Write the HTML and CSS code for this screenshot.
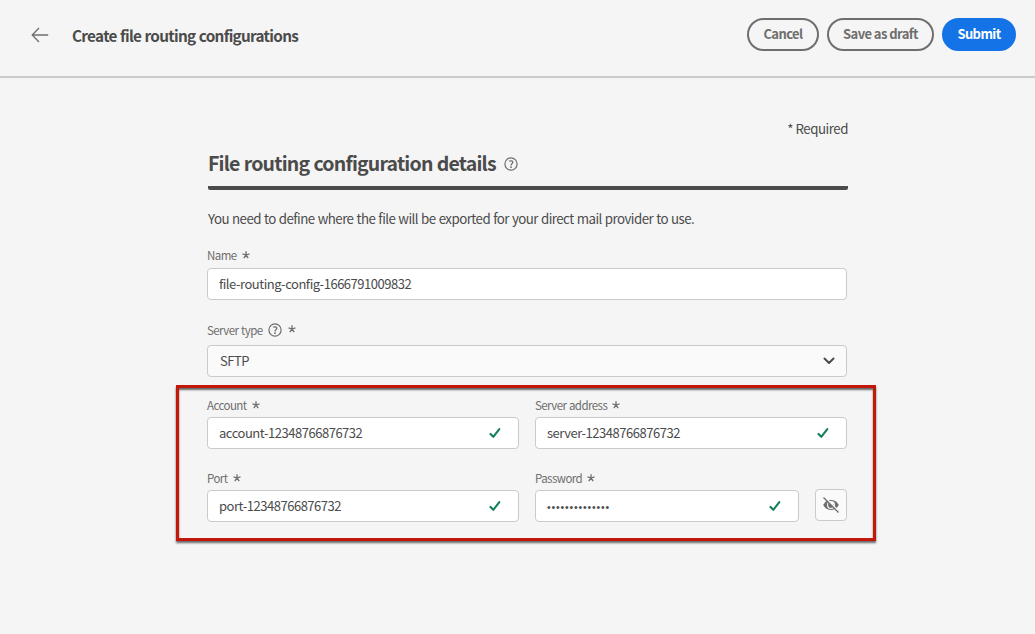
FILE: index.html
```html
<!DOCTYPE html>
<html lang="en">
<head>
<meta charset="utf-8">
<title>Create file routing configurations</title>
<link rel="stylesheet" href="styles.css">
</head>
<body>
<svg width="0" height="0" class="defs">
  <symbol id="check" viewBox="0 0 12 12"><path d="M1.5 6.900l2.800 2.900L10.300 2.100" fill="none" stroke="#12805c" stroke-width="2.100" stroke-linecap="round" stroke-linejoin="round"/></symbol>
  <symbol id="help" viewBox="0 0 14 14"><circle cx="7" cy="7" r="6.1" fill="none" stroke="currentColor" stroke-width="1.2"/><path d="M5.1 4.3c1-.7 3.7-.9 3.7.9 0 1.4-1.8 1.5-1.8 3.2" fill="none" stroke="currentColor" stroke-width="1.3"/><circle cx="7" cy="10.2" r=".9" fill="currentColor"/></symbol>
  <symbol id="star" viewBox="0 0 8 8"><path d="M4 4V.3M4 4L.5 2.9M4 4l3.5-1.1M4 4L1.8 7.1M4 4l2.2 3.1" stroke="currentColor" stroke-width="1.3" fill="none"/></symbol>
</svg>
<header class="topbar">
  <svg class="back" viewBox="0 0 18 16"><path d="M8 1L1.2 8 8 15M1.2 8H17.2" fill="none" stroke="#6e6e6e" stroke-width="1.3"/></svg>
  <h1 class="title">Create file routing configurations</h1>
  <div class="actions">
    <button class="btn cancel">Cancel</button>
    <button class="btn draft">Save as draft</button>
    <button class="btn submit">Submit</button>
  </div>
</header>
<main class="content">
  <div class="required">* Required</div>
  <div class="heading"><h2 class="heading-text">File routing configuration details</h2><svg class="help-small"><use href="#help"/></svg></div>
  <p class="intro">You need to define where the file will be exported for your direct mail provider to use.</p>
  <div class="label">Name<svg class="star"><use href="#star"/></svg></div>
  <div class="field name-field"><span>file-routing-config-1666791009832</span></div>
  <div class="label server-label">Server type<svg class="help"><use href="#help"/></svg><svg class="star raised"><use href="#star"/></svg></div>
  <div class="field select"><span>SFTP</span><svg class="chevron" viewBox="0 0 12 8"><path d="M1.5 1.5L6 6l4.5-4.5" fill="none" stroke="#4b4b4b" stroke-width="2" stroke-linecap="round" stroke-linejoin="round"/></svg></div>
  <section class="grid">
    <div>
      <div class="label">Account<svg class="star"><use href="#star"/></svg></div>
      <div class="field"><span>account-12348766876732</span><svg class="check"><use href="#check"/></svg></div>
    </div>
    <div>
      <div class="label">Server address<svg class="star"><use href="#star"/></svg></div>
      <div class="field"><span>server-12348766876732</span><svg class="check"><use href="#check"/></svg></div>
    </div>
    <div>
      <div class="label">Port<svg class="star"><use href="#star"/></svg></div>
      <div class="field"><span>port-12348766876732</span><svg class="check"><use href="#check"/></svg></div>
    </div>
    <div>
      <div class="label">Password<svg class="star"><use href="#star"/></svg></div>
      <div class="password-row">
        <div class="field"><span class="dots">••••••••••••••</span><svg class="check"><use href="#check"/></svg></div>
        <button class="eye" aria-label="Show password"><svg viewBox="0 0 18 18"><path d="M1.2 9C3 5.800 5.700 4 9 4s6 1.800 7.800 5c-1.800 3.200-4.500 5-7.800 5S3 12.200 1.200 9z" fill="#6e6e6e"/><circle cx="9" cy="9" r="4" fill="#fafafa"/><path d="M9 6.300a1.500 1.500 0 0 0 2.500 1.800A2.800 2.800 0 1 1 9 6.300z" fill="#6e6e6e"/><path d="M2.600 1L17 15.400" stroke="#fafafa" stroke-width="1.500"/><path d="M1.500 1.500L16.500 16.500" stroke="#6e6e6e" stroke-width="1.300"/></svg></button>
      </div>
    </div>
  </section>
</main>
</body>
</html>
```
FILE: styles.css
```css
*, *::after { box-sizing: border-box; }
body { margin: 0; min-height: 634px; background: #f5f5f5; color: #4b4b4b; font: 13.3px/20px "Noto Sans CJK SC", sans-serif; }
h1, h2, p { margin: 0; }
button { font: inherit; padding: 0; }
svg { flex: none; }
.defs { display: block; height: 0; }
.topbar { height: 78px; border-bottom: 2px solid #cacaca; padding: 18px 19px 0 31px; display: flex; align-items: flex-start; }
.back { width: 18px; height: 16px; margin-top: 9px; }
.title { margin: 6px 0 0 23px; font-size: 15.3px; font-weight: 700; line-height: 22px; letter-spacing: -.7px; word-spacing: .5px; white-space: nowrap; }
.actions { margin-left: auto; display: flex; gap: 8px; }
.btn { height: 33px; border: 2px solid #6e6e6e; border-radius: 17px; background: transparent; color: #6e6e6e; font-size: 13px; font-weight: 700; letter-spacing: -.58px; line-height: 26px; padding-bottom: 2px; white-space: nowrap; }
.cancel { width: 72px; }
.draft { width: 107px; }
.submit { width: 74px; background: #1473e6; border-color: #1473e6; color: #fff; }
.content { width: 640px; margin-left: 207px; }
.required { height: 20px; margin: 41px -1px 0 0; text-align: right; letter-spacing: -.46px; }
.heading { height: 51px; margin: 0 -1px 0 1px; padding-top: 10px; border-bottom: 4px solid #4b4b4b; border-radius: 2px; display: flex; align-items: flex-start; gap: 8px; }
.heading-text { font-size: 19.5px; line-height: 28px; font-weight: 700; letter-spacing: -.8px; word-spacing: .5px; white-space: nowrap; }
.help-small { width: 14px; height: 14px; margin-top: 8px; color: #6e6e6e; }
.intro { margin: 19px 0 0 1px; letter-spacing: -.54px; word-spacing: .6px; white-space: nowrap; }
.label { height: 20px; margin-bottom: 3px; display: flex; align-items: center; gap: 5px; font-size: 11.5px; letter-spacing: -.55px; word-spacing: .4px; color: #6e6e6e; white-space: nowrap; }
.intro + .label { margin-top: 16px; }
.star { width: 8px; height: 8px; }
.raised { margin: -3px 0 0 1px; }
.help { width: 14px; height: 14px; }
.server-label { margin: 20px 0 5px; }
.field { height: 32px; padding: 0 17px 0 11px; border: 1px solid #cacaca; border-radius: 4px; background: #fff; display: flex; align-items: center; justify-content: space-between; font-size: 13px; letter-spacing: -.47px; white-space: nowrap; }
.field span { margin-top: -1px; }
.select { background: #fafafa; padding: 0 12px; }
.select .chevron { margin-right: -1px; }
.chevron { width: 12px; height: 8px; }
.check { width: 12px; height: 12px; }
.grid { position: relative; margin-top: 18px; display: grid; grid-template-columns: 312px 312px; gap: 18px 16px; }
.grid .label { margin-bottom: 2px; }
.grid .label + * { margin-bottom: 1px; }
.grid::after { content: ""; position: absolute; left: -31px; top: -10px; width: 700px; height: 156px; border: 3px solid #c4170c; box-shadow: 0 2px 2px #666, inset 0 2px 2px #666; pointer-events: none; }
.field .dots { font-family: "Liberation Sans", sans-serif; font-size: 10.5px; letter-spacing: .82px; margin-top: 1px; }
.password-row { display: flex; justify-content: space-between; }
.password-row .field { width: 264px; }
.eye { width: 32px; height: 32px; margin-top: -1px; border: 1px solid #cacaca; border-radius: 4px; background: #fafafa; display: grid; place-items: center; }
.eye svg { width: 18px; height: 18px; }
```
